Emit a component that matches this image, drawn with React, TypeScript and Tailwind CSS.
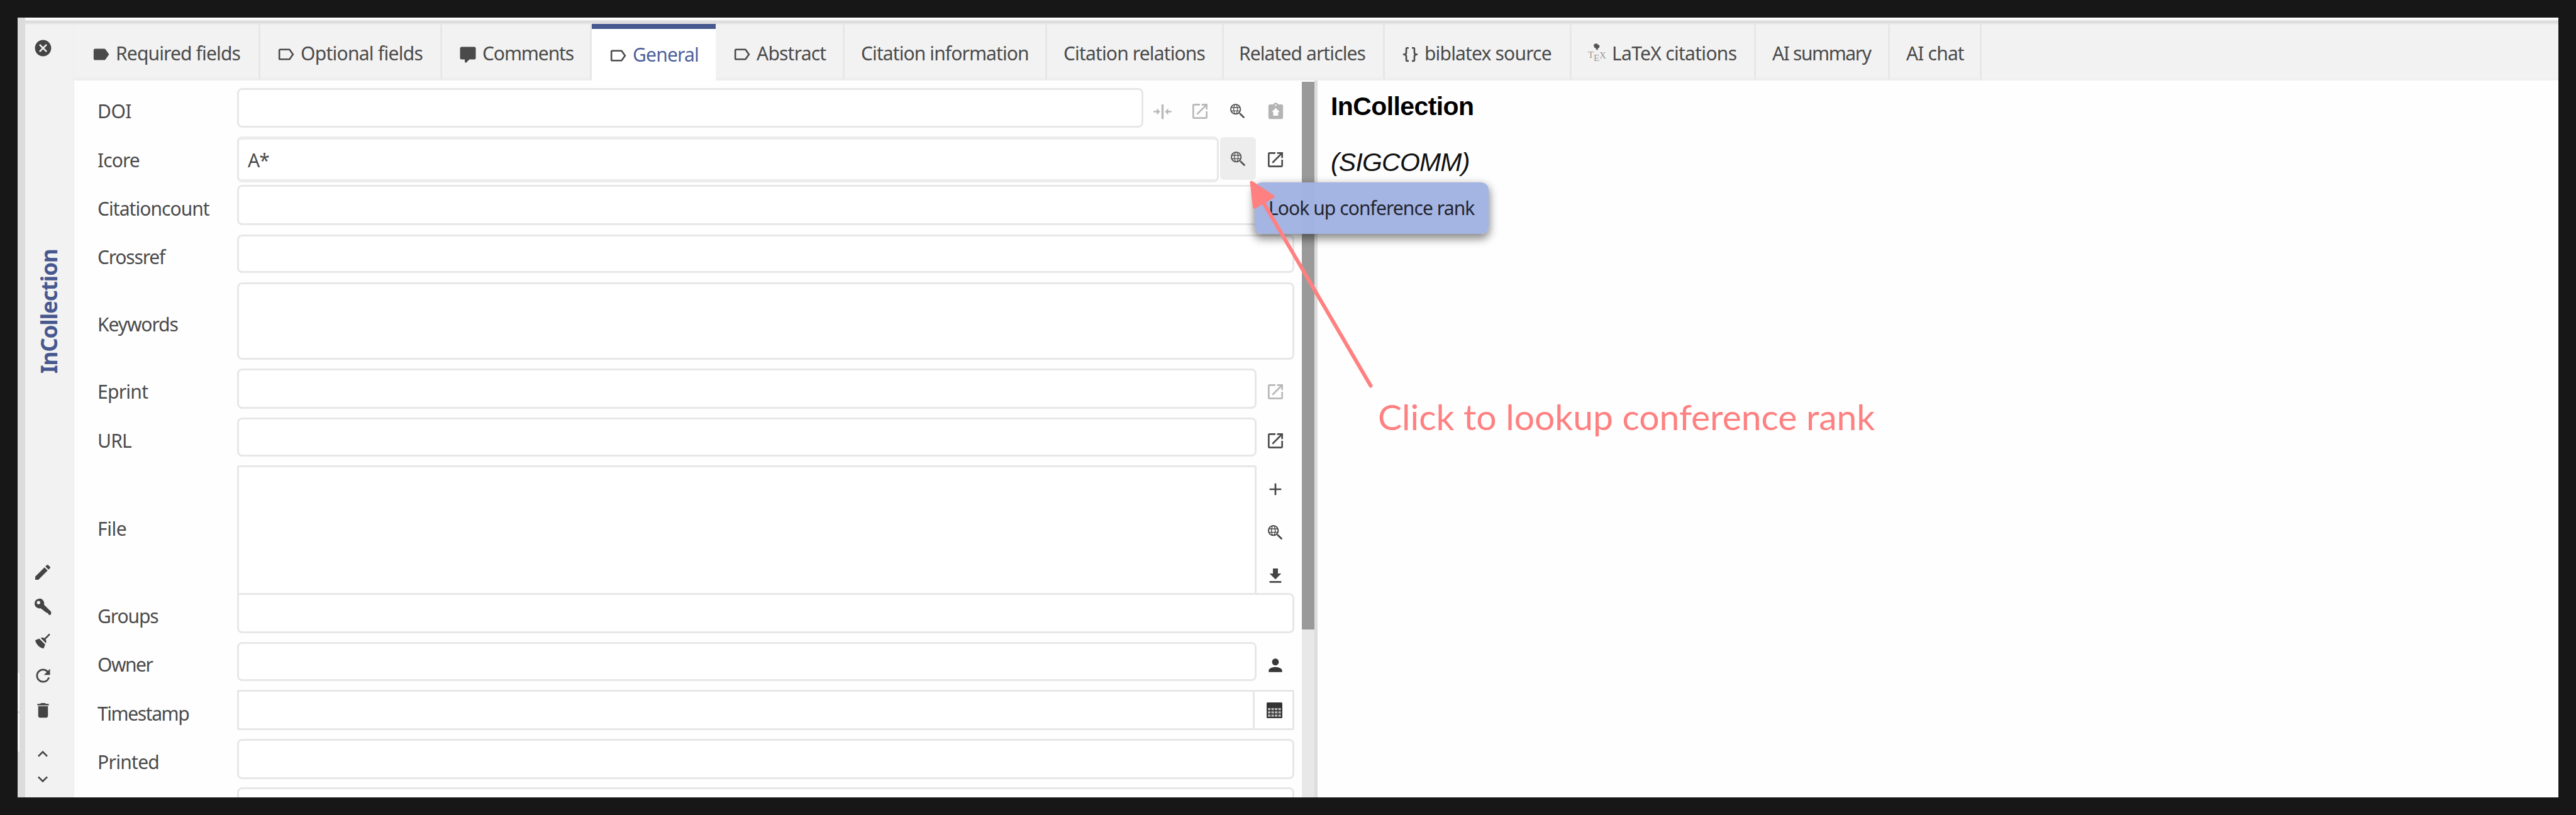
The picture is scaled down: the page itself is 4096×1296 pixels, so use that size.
import React from "react";
import {
  MdCancel,
  MdEdit,
  MdRefresh,
  MdDelete,
  MdExpandLess,
  MdExpandMore,
  MdOpenInNew,
  MdAdd,
  MdFileDownload,
  MdPerson,
} from "react-icons/md";

function Glyph({ d, className }: { d: string; className: string }) {
  return (
    <svg viewBox="0 0 24 24" fill="currentColor" fillRule="evenodd" className={"shrink-0 " + className}>
      <path d={d} />
    </svg>
  );
}

const LABEL =
  "M17.63,5.84C17.27,5.33 16.67,5 16,5H5A2,2 0 0,0 3,7V17A2,2 0 0,0 5,19H16C16.67,19 17.27,18.66 17.63,18.15L22,12Z";
const LABEL_OUTLINE =
  "M16,17H5V7H16L19.55,12ZM17.63,5.84C17.27,5.33 16.67,5 16,5H5A2,2 0 0,0 3,7V17A2,2 0 0,0 5,19H16C16.67,19 17.27,18.66 17.63,18.15L22,12Z";
const COMMENT =
  "M9,22A1,1 0 0,1 8,21V18H4A2,2 0 0,1 2,16V4C2,2.89 2.9,2 4,2H20A2,2 0 0,1 22,4V16A2,2 0 0,1 20,18H13.9L10.2,21.71C10,21.9 9.75,22 9.5,22Z";
const BRACES =
  "M8,3A2,2 0 0,0 6,5V9A2,2 0 0,1 4,11H3V13H4A2,2 0 0,1 6,15V19A2,2 0 0,0 8,21H10V19H8V14A2,2 0 0,0 6,12A2,2 0 0,0 8,10V5H10V3ZM16,3A2,2 0 0,1 18,5V9A2,2 0 0,0 20,11H21V13H20A2,2 0 0,0 18,15V19A2,2 0 0,1 16,21H14V19H16V14A2,2 0 0,1 18,12A2,2 0 0,1 16,10V5H14V3Z";
const SEARCH_WEB =
  "M15.5,14L20.5,19L19,20.5L14,15.5V14.71L13.73,14.43C12.59,15.41 11.11,16 9.5,16A6.5,6.5 0 0,1 3,9.5A6.5,6.5 0 0,1 9.5,3A6.5,6.5 0 0,1 16,9.5C16,11.11 15.41,12.59 14.43,13.73L14.71,14H15.5M9.5,4.5L8.95,4.53C8.71,5.05 8.34,5.93 8.07,7H10.93C10.66,5.93 10.29,5.05 10.05,4.53C9.87,4.5 9.69,4.5 9.5,4.5M13.83,7C13.24,5.97 12.29,5.17 11.15,4.78C11.39,5.31 11.7,6.08 11.93,7H13.83M5.17,7H7.07C7.3,6.08 7.61,5.31 7.85,4.78C6.71,5.17 5.76,5.97 5.17,7M4.5,9.5C4.5,10 4.58,10.53 4.73,11H6.87L6.75,9.5L6.87,8H4.73C4.58,8.47 4.5,9 4.5,9.5M14.27,11C14.42,10.53 14.5,10 14.5,9.5C14.5,9 14.42,8.47 14.27,8H12.13C12.21,8.5 12.25,9 12.25,9.5C12.25,10 12.21,10.5 12.13,11H14.27M7.87,8L7.75,9.5L7.87,11H11.13C11.21,10.5 11.25,10 11.25,9.5C11.25,9 11.21,8.5 11.13,8H7.87M9.5,14.5C9.68,14.5 9.86,14.5 10.03,14.47C10.28,13.95 10.66,13.07 10.93,12H8.07C8.34,13.07 8.72,13.95 8.97,14.47L9.5,14.5M13.83,12H11.93C11.7,12.92 11.39,13.69 11.15,14.22C12.29,13.83 13.24,13.03 13.83,12M5.17,12C5.76,13.03 6.71,13.83 7.85,14.22C7.61,13.69 7.3,12.92 7.07,12H5.17Z";
const COMPARE =
  "M19,16V13H23V11H19V8L15,12ZM5,8V11H1V13H5V16L9,12ZM10.7,21H13.3V3H10.7Z";
const CLIPBOARD_UP =
  "M19,3H14.82C14.4,1.84 13.3,1 12,1S9.6,1.84 9.18,3H5C3.9,3 3,3.9 3,5V19A2,2 0 0,0 5,21H19A2,2 0 0,0 21,19V5A2,2 0 0,0 19,3ZM12,3A1,1 0 0,1 12,5A1,1 0 0,1 12,3ZM12,7.5L17,12.5H15V17H9V12.5H7Z";
const BROOM =
  "M19.36,2.72L20.78,4.14L15.06,9.85C16.13,11.39 16.28,13.24 15.38,14.44L9.06,8.12C10.26,7.22 12.11,7.37 13.65,8.44ZM5.93,17.57C3.92,15.56 2.69,13.16 2.35,10.92L7.23,8.83L14.67,16.27L12.58,21.15C10.34,20.81 7.94,19.58 5.93,17.57Z";
const KEY =
  "M7.7,1.5A6.2,6.2 0 0,1 13.7,9.3L22.6,18.2V21.2L21.2,22.6L19.4,21.8L18.6,19.9L16.6,19.3L9.3,13.7A6.2,6.2 0 1,1 7.7,1.5ZM6.6,4.4A2.2,2.2 0 1,0 6.6,8.8A2.2,2.2 0 1,0 6.6,4.4Z";

function CalendarIcon() {
  const cols = [2, 7.3, 12.6, 17.9];
  const rows = [8.6, 13.6, 18.6];
  return (
    <svg viewBox="0 0 24 24" className="ml-[3px] size-[25px]">
      <rect width="24" height="24" rx="1.5" fill="#333333" />
      {rows.map((y) => cols.map((x) => <rect key={x + "-" + y} x={x} y={y} width="3.9" height="3.2" fill="#b9b9b9" />))}
    </svg>
  );
}

function TexIcon() {
  return (
    <svg viewBox="0 0 29 36" className="h-[36px] w-[29px] shrink-0 overflow-visible">
      <path d="M9,2.5C10.5,0 14,-.5 15.5,1.5L18.5,3.5L18,6.5L16,8L14.5,11.5L12,7.5L10,6.5Z" fill="#555555" />
      <g fill="#999999" fontFamily="Liberation Serif" fontSize="15">
        <text x="0" y="23">T</text>
        <text x="9" y="28">E</text>
        <text x="18" y="24">X</text>
      </g>
    </svg>
  );
}

type Tab = { name: string; box: string; text: string; icon?: React.ReactNode; active?: boolean };

const label = <Glyph d={LABEL_OUTLINE} className="mt-[2px] mr-2 size-[31px]" />;

const tabs: Tab[] = [
  { name: "Required fields", box: "w-[296px] pl-[27px]", text: "tracking-[-0.85px]", icon: <Glyph d={LABEL} className="mt-[2px] mr-2 size-[31px]" /> },
  { name: "Optional fields", box: "w-[289px] pl-[25px]", text: "tracking-[-0.73px]", icon: label },
  { name: "Comments", box: "w-[238px] pl-[26px]", text: "tracking-[-1.1px]", icon: <Glyph d={COMMENT} className="mt-[3px] mr-2 size-[30px]" /> },
  { name: "General", box: "w-[197px] pl-[26px]", text: "tracking-[-0.8px]", icon: label, active: true },
  { name: "Abstract", box: "w-[205px] pl-[26px]", text: "tracking-[-0.79px]", icon: label },
  { name: "Citation information", box: "w-[322px] pl-[26px]", text: "tracking-[-0.9px]" },
  { name: "Citation relations", box: "w-[281px] pl-[26px]", text: "tracking-[-0.85px]" },
  { name: "Related articles", box: "w-[256px] pl-[24px]", text: "tracking-[-0.9px]" },
  { name: "biblatex source", box: "w-[297px] pl-[25px]", text: "tracking-[-0.83px]", icon: <Glyph d={BRACES} className="mt-[2px] mr-[7px] size-[31px]" /> },
  { name: "LaTeX citations", box: "w-[293px] pl-[26px]", text: "tracking-[-0.7px]", icon: <span className="mr-[9px]"><TexIcon /></span> },
  { name: "AI summary", box: "w-[213px] pl-[26px]", text: "tracking-[-1.4px]" },
  { name: "AI chat", box: "w-[146px] pl-[26px]", text: "tracking-[-0.84px]" },
];

function TabBar() {
  return (
    <div className="flex h-[89px] shrink-0 bg-[#f2f2f2] text-[30px] leading-[32px] text-[#4a4a4a]">
      {tabs.map((t) =>
        t.active ? (
          <div key={t.name} className={"-mt-[1px] flex h-[90px] border-t-[8px] border-[#47588f] bg-white pt-[25px] " + t.box}>
            {t.icon}
            <span className={"whitespace-nowrap text-[#4f5f9c] " + t.text}>{t.name}</span>
          </div>
        ) : (
          <div key={t.name} className={"flex border-r-[3px] border-b-[4px] border-r-[#e7e7e7] border-b-[#eeeeee] pt-[30px] " + t.box}>
            {t.icon}
            <span className={"whitespace-nowrap " + t.text}>{t.name}</span>
          </div>
        )
      )}
      <div className="grow border-b-[3px] border-[#f0f0f0]" />
    </div>
  );
}

function Sidebar() {
  return (
    <div className="flex w-[78px] shrink-0 flex-col border-r-[1px] border-[#ececec] bg-[#f2f2f2] text-[#444444]">
      <div className="flex h-[357px] w-[56px] shrink-0 justify-center pt-[22px]">
        <MdCancel className="size-[31px]" />
      </div>
      <div className="ml-[16px] h-[198px] w-[44px] shrink-0 rotate-180 text-[35px] leading-[44px] font-bold tracking-[-1.1px] whitespace-nowrap text-[#47588f] [writing-mode:vertical-rl]">
        InCollection
      </div>
      <div className="mt-[288px] grid w-[56px] shrink-0 auto-rows-[55px] place-items-center">
        <MdEdit className="size-[32px]" />
        <Glyph d={KEY} className="size-[30px]" />
        <Glyph d={BROOM} className="size-[31px]" />
        <MdRefresh className="size-[33px]" />
        <MdDelete className="size-[31px]" />
      </div>
      <div className="mt-[22px] grid w-[56px] shrink-0 auto-rows-[40px] place-items-center">
        <MdExpandLess className="size-[32px]" />
        <MdExpandMore className="size-[32px]" />
      </div>
    </div>
  );
}

function Cell({ children, className = "" }: { children: React.ReactNode; className?: string }) {
  return <div className={"flex h-[74px] w-[60px] shrink-0 items-center justify-center " + className}>{children}</div>;
}

type RowProps = {
  name: string;
  row: string;
  text: string;
  field: string;
  value?: string;
  inner?: React.ReactNode;
  children?: React.ReactNode;
};

function Row({ name, row, text, field, value, inner, children }: RowProps) {
  return (
    <div className={"flex shrink-0 items-start " + row}>
      <div className={"w-[222px] shrink-0 whitespace-nowrap " + text}>{name}</div>
      <div className={"flex shrink-0 border-[#e7e7e7] bg-white " + field}>
        {value && <span className="pt-[17px] pl-[14px] tracking-[-1px]">{value}</span>}
        {inner}
      </div>
      {children}
    </div>
  );
}

function Form() {
  const open = <MdOpenInNew className="size-[32px]" />;
  return (
    <div className="flex w-[1952px] shrink-0 flex-col overflow-hidden pt-[12px] pl-[37px] text-[30px] leading-[32px] text-[#4a4a4a]">
      <Row name="DOI" row="h-[77px]" text="pt-[21px] tracking-[-0.5px]" field="h-[63px] w-[1441px] rounded-[8px] border-[3px]">
        <Cell className="text-[#b8b8b8]"><Glyph d={COMPARE} className="size-[31px]" /></Cell>
        <Cell className="text-[#b8b8b8]">{open}</Cell>
        <Cell className="text-[#555555]"><Glyph d={SEARCH_WEB} className="size-[32px]" /></Cell>
        <Cell className="text-[#b4b4b4]"><Glyph d={CLIPBOARD_UP} className="size-[31px]" /></Cell>
      </Row>
      <Row name="Icore" row="h-[77px]" text="pt-[22px] tracking-[-0.94px]" value="A*" field="h-[73px] w-[1561px] rounded-[8px] border-x-[3px] border-y-[5px] border-y-[#ececec]">
        <div className="mt-[1px] mr-[1px] ml-[2px] flex h-[68px] w-[57px] shrink-0 items-center justify-center rounded-[6px] bg-[#ededed] pt-[2px] text-[#555555]">
          <Glyph d={SEARCH_WEB} className="size-[32px]" />
        </div>
        <Cell className="text-[#4c4c4c]">{open}</Cell>
      </Row>
      <Row name="Citationcount" row="h-[79px]" text="pt-[22px] tracking-[-0.95px]" field="h-[64px] w-[1681px] rounded-[8px] border-[3px]" />
      <Row name="Crossref" row="h-[76px]" text="pt-[20px] tracking-[-1.2px]" field="h-[61px] w-[1681px] rounded-[8px] border-[3px]" />
      <Row name="Keywords" row="h-[137px]" text="pt-[51px] tracking-[-1.1px]" field="h-[123px] w-[1681px] rounded-[8px] border-[3px]" />
      <Row name="Eprint" row="h-[78px]" text="pt-[21px] tracking-[-0.73px]" field="h-[64px] w-[1621px] rounded-[8px] border-[3px]">
        <Cell className="text-[#b8b8b8]">{open}</Cell>
      </Row>
      <Row name="URL" row="h-[76px]" text="pt-[21px] tracking-[-0.8px]" field="h-[62px] w-[1621px] rounded-[8px] border-[3px]">
        <Cell className="text-[#4c4c4c]">{open}</Cell>
      </Row>
      <Row name="File" row="h-[203px]" text="pt-[85px] tracking-[-0.4px]" field="h-[203px] w-[1621px] rounded-t-[3px] border-[3px] border-b-0">
        <div className="grid w-[60px] shrink-0 auto-rows-[69px] place-items-center pt-[3px] text-[#444444]">
          <MdAdd className="size-[32px]" />
          <Glyph d={SEARCH_WEB} className="size-[32px]" />
          <MdFileDownload className="size-[32px]" />
        </div>
      </Row>
      <Row name="Groups" row="h-[78px]" text="pt-[21px] tracking-[-1.1px]" field="h-[64px] w-[1681px] rounded-[8px] rounded-tl-none border-[3px]" />
      <Row name="Owner" row="h-[76px]" text="pt-[20px] tracking-[-1.5px]" field="h-[62px] w-[1621px] rounded-[8px] border-[3px]">
        <Cell className="text-[#383838]"><MdPerson className="size-[32px]" /></Cell>
      </Row>
      <Row
        name="Timestamp"
        row="h-[78px]"
        text="pt-[22px] tracking-[-1.4px]"
        field="h-[64px] w-[1681px] rounded-[2px] border-[3px]"
        inner={
          <div className="ml-auto flex w-[63px] items-center justify-center border-l-[3px] border-[#e7e7e7]">
            <CalendarIcon />
          </div>
        }
      />
      <Row name="Printed" row="h-[77px]" text="pt-[21px] tracking-[-0.7px]" field="h-[64px] w-[1681px] rounded-[8px] border-[3px]" />
      <Row name="" row="h-[64px]" text="" field="h-[64px] w-[1681px] rounded-[8px] border-[3px]" />
    </div>
  );
}

function Preview() {
  return (
    <div className="grow bg-[#fefefe] pl-[21px] font-['Liberation_Sans'] text-[41px] leading-[44px] text-black">
      <div className="pt-[19px] font-bold tracking-[-0.6px]">InCollection</div>
      <div className="pt-[45px] tracking-[-0.8px] text-[#111111] italic">(SIGCOMM)</div>
    </div>
  );
}

export default function App() {
  return (
    <div className="relative h-[1296px] w-[4096px] overflow-hidden bg-[#171717] p-[28px] font-['Noto_Sans',sans-serif]">
      <div className="flex h-[1240px] w-[4040px] overflow-hidden bg-[#fefefe]">
        <div className="flex w-[12px] shrink-0 flex-col bg-[#dcdcdc] pt-[1042px]">
          <div className="h-[61px] w-[3px] bg-[#f4f4f4]" />
          <div className="mt-[3px] h-[61px] w-[3px] bg-[#f4f4f4]" />
        </div>
        <div className="flex min-w-0 grow flex-col">
          <div className="h-[11px] shrink-0 bg-linear-to-b from-white from-20% via-[#d9d9d9] via-60% to-[#ececec]" />
          <div className="flex min-h-0 grow">
            <Sidebar />
            <div className="flex min-w-0 grow flex-col">
              <TabBar />
              <div className="flex min-h-0 grow bg-[#fefefe]">
                <Form />
                <div className="flex w-[20px] shrink-0 flex-col bg-[#e8e8e8]">
                  <div className="h-[2px] bg-white" />
                  <div className="h-[871px] bg-[#9a9a9a]" />
                </div>
                <div className="w-[5px] shrink-0 bg-[#dddddd]" />
                <Preview />
              </div>
            </div>
          </div>
        </div>
      </div>

      <div className="absolute top-[290px] left-[1995px] h-[82px] w-[372px] rounded-[12px] bg-[#a2b3e2]/98 pt-[25px] pl-[22px] text-[30px] leading-[32px] tracking-[-0.92px] whitespace-nowrap text-[#22242e] shadow-[0_6px_14px_2px_rgba(0,0,0,0.45)]">
        Look up conference rank
      </div>
      <svg viewBox="0 0 4096 1296" className="absolute inset-0 size-full text-[#ff8080]">
        <path d="M2179.5 613.5L2010 324" stroke="currentColor" strokeWidth="6" strokeLinecap="round" />
        <path d="M1990 290L2024 312.5L1994.500 329.500Z" fill="currentColor" stroke="currentColor" strokeWidth="5" strokeLinejoin="round" />
      </svg>
      <div className="absolute top-[630px] left-[2191px] font-[Lato] text-[57px] leading-[64px] whitespace-nowrap text-[#ff8080]">
        Click to lookup conference rank
      </div>
    </div>
  );
}
